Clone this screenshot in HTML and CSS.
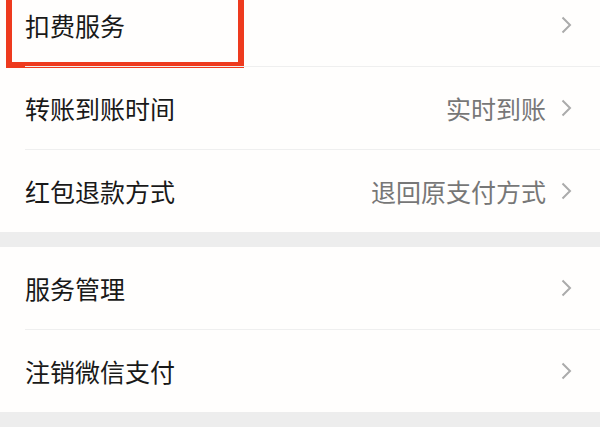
FILE: index.html
```html
<!DOCTYPE html>
<html lang="zh-CN">
<head>
    <meta charset="UTF-8">
    <meta name="viewport" content="width=device-width, initial-scale=1.0">
    <title>支付设置</title>
    <link rel="stylesheet" href="styles.css">
</head>
<body>

    <div class="page">
        <div class="group first">
            <div class="cell">
                <span class="label">扣费服务</span>
                <svg class="arrow" viewBox="0 0 11 18"><polyline points="1.5,1.5 9,9 1.5,16.5"/></svg>
                <!-- red marker drawn over the first row -->
                <div class="marker"></div>
            </div>
            <div class="cell">
                <span class="label">转账到账时间</span>
                <span class="value">实时到账</span>
                <svg class="arrow" viewBox="0 0 11 18"><polyline points="1.5,1.5 9,9 1.5,16.5"/></svg>
            </div>
            <div class="cell">
                <span class="label">红包退款方式</span>
                <span class="value">退回原支付方式</span>
                <svg class="arrow" viewBox="0 0 11 18"><polyline points="1.5,1.5 9,9 1.5,16.5"/></svg>
            </div>
        </div>

        <div class="group">
            <div class="cell">
                <span class="label">服务管理</span>
                <svg class="arrow" viewBox="0 0 11 18"><polyline points="1.5,1.5 9,9 1.5,16.5"/></svg>
            </div>
            <div class="cell">
                <span class="label">注销微信支付</span>
                <svg class="arrow" viewBox="0 0 11 18"><polyline points="1.5,1.5 9,9 1.5,16.5"/></svg>
            </div>
        </div>
    </div>

</body>
</html>
```

FILE: styles.css
```css
body {
    margin: 0;
    background-color: #ededed;
    font-family: "Noto Sans CJK SC", "Noto Sans", sans-serif;
    color: #191919;
    overflow: hidden;
}
.page {
    display: flex;
    flex-direction: column;
    gap: 15px;
}
.group {
    background-color: #fffefd;
}
/* first row is cut by the top of the screen */
.group.first {
    margin-top: -16px;
}
.cell {
    position: relative;
    display: flex;
    align-items: center;
    height: 82px;
    padding: 0 28px 0 25px;
}
.cell::after {
    content: "";
    position: absolute;
    left: 25px;
    right: 0;
    bottom: -1px;
    height: 1px;
    background-color: #efefef;
}
.cell + .cell {
    margin-top: 1px;
}
.cell:last-child::after {
    display: none;
}
.label {
    flex: 1;
    font-size: 25px;
    line-height: 1;
}
.value {
    font-size: 25px;
    line-height: 1;
    color: #777;
    margin-right: 15px;
}
.arrow {
    width: 11px;
    height: 18px;
    fill: none;
    stroke: #ababab;
    stroke-width: 2;
}
.marker {
    position: absolute;
    left: 6px;
    top: -10px;
    width: 226px;
    bottom: -2px;
    border: 6px solid #ee3a1e;
    border-top: none;
}
```
